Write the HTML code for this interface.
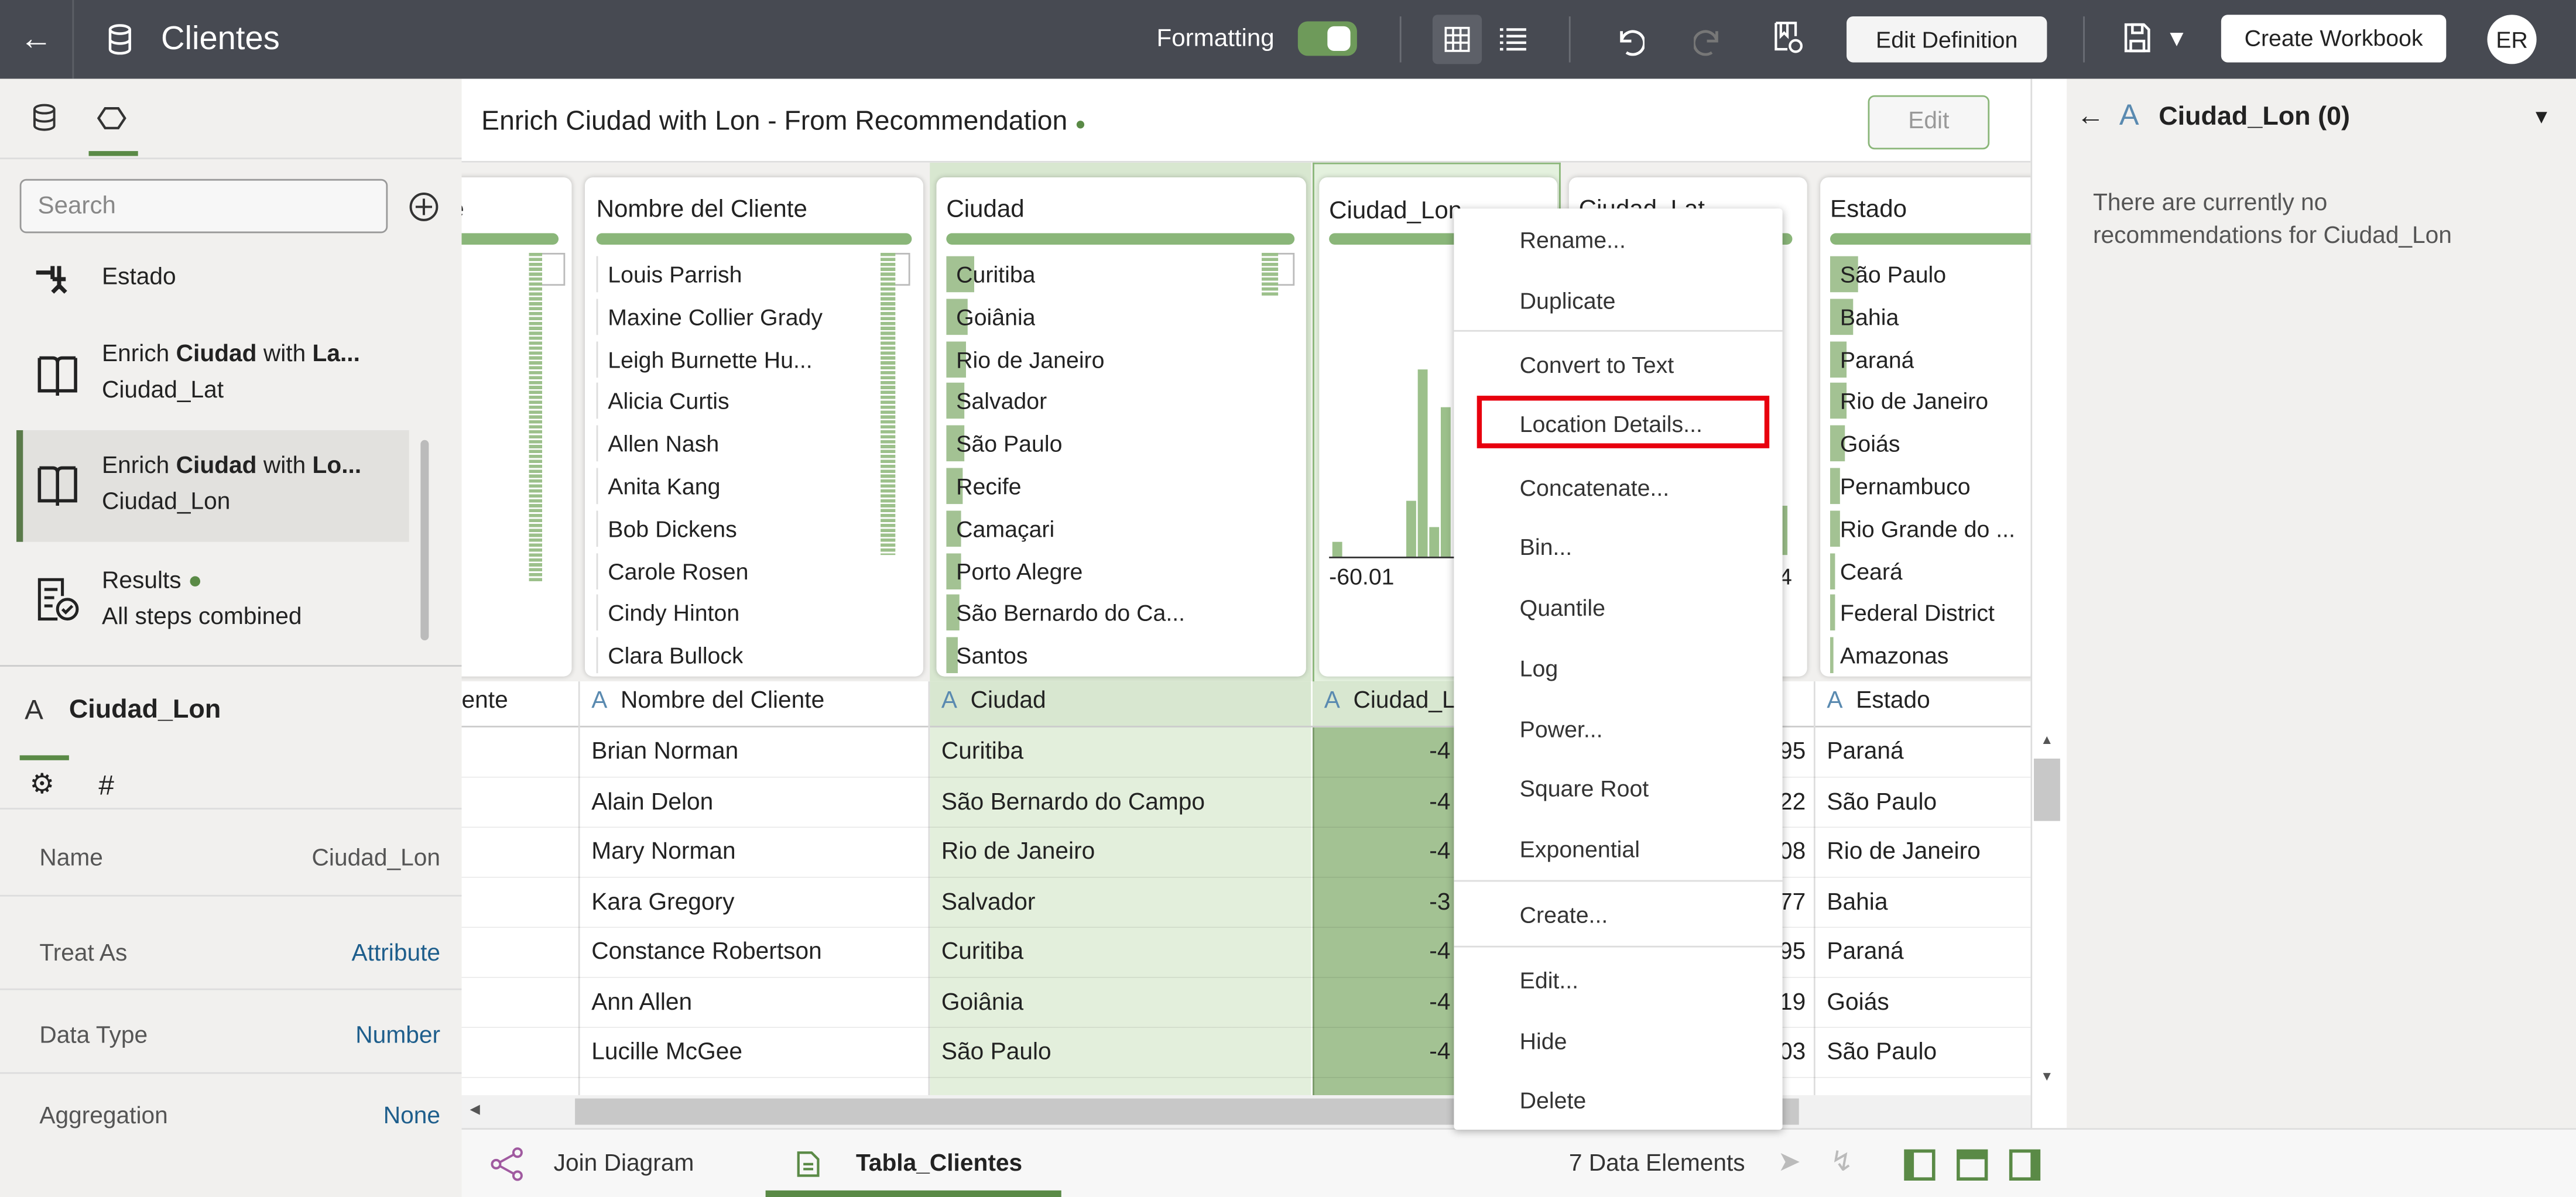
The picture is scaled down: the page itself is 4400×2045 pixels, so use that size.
<!DOCTYPE html>
<html><head><meta charset="utf-8"><style>
*{box-sizing:border-box;margin:0;padding:0}
html,body{width:4400px;height:2045px;overflow:hidden;background:#fff}
#s{position:absolute;left:0;top:0;width:1568px;height:729px;transform:scale(2.8061,2.8052);transform-origin:0 0;font-family:"Liberation Sans",sans-serif;color:#222;font-size:14px;overflow:hidden}
.a{position:absolute}
.t{position:absolute;white-space:nowrap;line-height:1}
.top{left:0;top:0;width:1568px;height:48px;background:#474a52}
.w{color:#fff}
.btn{position:absolute;background:#fff;border-radius:4px;color:#222;font-size:14px;text-align:center;line-height:28px}
.vd{position:absolute;width:1px;background:#6a6d74;top:10px;height:28px}
.card{position:absolute;top:9px;height:304px;background:#fff;border-radius:5px;box-shadow:0 0 3px rgba(0,0,0,.2)}
.bar{position:absolute;top:34px;height:7px;background:#8ab679;border-radius:4px}
.row{position:absolute;height:22px;line-height:22px;font-size:14px;white-space:nowrap;border-left:1px solid #ddd;padding-left:6px;overflow:hidden}
.fill{position:absolute;left:0;top:0;height:22px;background:#a3c293}
.mi{position:absolute;left:40px;font-size:14px;color:#333;white-space:nowrap}
.sep{position:absolute;left:0;width:200px;height:1px;background:#ddd}
.col{position:absolute;top:443px;font-size:14.5px;line-height:30.5px;white-space:nowrap}
</style></head><body><div id="s">
<!-- top bar -->
<div class="a top"></div>
<div class="t w" style="left:12px;top:14px;font-size:20px">&#8592;</div>
<div class="a" style="left:44px;top:0;width:1px;height:48px;background:#5c5f66"></div>
<svg class="a" style="left:64px;top:14px" width="18" height="20" viewBox="0 0 18 20"><g fill="none" stroke="#fff" stroke-width="1.6"><ellipse cx="9" cy="4" rx="6" ry="2.5"/><path d="M3 4v12c0 1.4 2.7 2.5 6 2.5s6-1.1 6-2.5V4M3 10c0 1.4 2.7 2.5 6 2.5s6-1.1 6-2.5"/></g></svg>
<div class="t w" style="left:98px;top:14px;font-size:20px">Clientes</div>
<div class="t w" style="left:704px;top:16px;font-size:15px">Formatting</div>
<div class="a" style="left:790px;top:13px;width:36px;height:21px;border-radius:6px;background:#6e9a5a"></div>
<div class="a" style="left:808px;top:16px;width:14px;height:15px;border-radius:4px;background:#fff"></div>
<div class="vd" style="left:852px"></div>
<div class="a" style="left:872px;top:9px;width:30px;height:30px;background:#5d6068;border-radius:3px"></div>
<svg class="a" style="left:879px;top:16px" width="16" height="16"><g stroke="#fff" stroke-width="1.3" fill="none"><rect x="1" y="1" width="14" height="14"/><path d="M1 5.5h14M1 10h14M5.5 1v14M10 1v14"/></g></svg>
<svg class="a" style="left:912px;top:16px" width="18" height="16"><g stroke="#fff" stroke-width="1.6"><path d="M1 2h2M1 6h2M1 10h2M1 14h2M5 2h12M5 6h12M5 10h12M5 14h12"/></g></svg>
<div class="vd" style="left:955px"></div>
<svg class="a" style="left:981px;top:14px" width="20" height="20"><path d="M6 5v6h6M6 11a7 7 0 1 1 3 7" stroke="#fff" stroke-width="1.7" fill="none"/></svg>
<svg class="a" style="left:1031px;top:14px" width="20" height="20"><path d="M14 5v6H8M14 11a7 7 0 1 0-3 7" stroke="#777" stroke-width="1.7" fill="none"/></svg>
<svg class="a" style="left:1079px;top:12px" width="20" height="22"><g stroke="#fff" stroke-width="1.5" fill="none"><path d="M2 2h12v8M2 2v16h7M5 2v8l2-2 2 2V2"/><circle cx="14" cy="16" r="3.5"/></g></svg>
<div class="btn" style="left:1124px;top:10px;width:122px;height:28px;background:#f4f4f4">Edit Definition</div>
<div class="vd" style="left:1268px"></div>
<svg class="a" style="left:1292px;top:13px" width="18" height="20"><g stroke="#fff" stroke-width="1.6" fill="none"><path d="M2 2h11l3 3v13H2z"/><rect x="6" y="2" width="6" height="5"/><rect x="5" y="12" width="8" height="6"/></g></svg>
<div class="t w" style="left:1318px;top:16px;font-size:14px">&#9660;</div>
<div class="btn" style="left:1352px;top:9px;width:137px;height:29px">Create Workbook</div>
<div class="a" style="left:1514px;top:9px;width:30px;height:30px;border-radius:50%;background:#fff;color:#222;font-size:14px;text-align:center;line-height:30px">ER</div>

<!-- left panel -->
<div class="a" style="left:0;top:48px;width:281px;height:681px;background:#f1f0ee"></div>
<svg class="a" style="left:19px;top:63px" width="16" height="18"><g fill="none" stroke="#333" stroke-width="1.4"><ellipse cx="8" cy="3.5" rx="6" ry="2.5"/><path d="M2 3.5v10c0 1.4 2.7 2.5 6 2.5s6-1.1 6-2.5v-10M2 8.5c0 1.4 2.7 2.5 6 2.5s6-1.1 6-2.5"/></g></svg>
<svg class="a" style="left:59px;top:65px" width="18" height="14"><path d="M5 1h8l4 6-4 6H5L1 7z" fill="none" stroke="#333" stroke-width="1.5"/></svg>
<div class="a" style="left:54px;top:92px;width:30px;height:3px;background:#5a8a46"></div>
<div class="a" style="left:0;top:96px;width:281px;height:1px;background:#ddd"></div>
<div class="a" style="left:12px;top:109px;width:224px;height:33px;border:1px solid #999;border-radius:4px;background:#f7f7f7"></div>
<div class="t" style="left:23px;top:118px;color:#888;font-size:15px">Search</div>
<svg class="a" style="left:248px;top:116px" width="20" height="20"><circle cx="10" cy="10" r="8" fill="none" stroke="#333" stroke-width="1.4"/><path d="M10 5v10M5 10h10" stroke="#333" stroke-width="1.4"/></svg>
<svg class="a" style="left:20px;top:160px" width="22" height="22"><path d="M2 6h10M12 2v8M16 2v14M12 10h8M12 18l4-4 4 4" stroke="#222" stroke-width="2.5" fill="none"/></svg>
<div class="t" style="left:62px;top:162px;font-size:14.5px">Estado</div>
<svg class="a" style="left:22px;top:215px" width="26" height="28"><path d="M2 3h8c2 0 3 1 3 3v20M24 3h-8c-2 0-3 1-3 3M2 3v20h11M24 3v20H13" fill="none" stroke="#222" stroke-width="2"/></svg>
<div class="t" style="left:62px;top:209px;font-size:14.5px">Enrich <b>Ciudad</b> with <b>La...</b></div>
<div class="t" style="left:62px;top:231px;font-size:14.5px">Ciudad_Lat</div>
<div class="a" style="left:10px;top:262px;width:239px;height:68px;background:#e2e1de"></div>
<div class="a" style="left:10px;top:262px;width:4px;height:68px;background:#5a7a4a"></div>
<svg class="a" style="left:22px;top:282px" width="26" height="28"><path d="M2 3h8c2 0 3 1 3 3v20M24 3h-8c-2 0-3 1-3 3M2 3v20h11M24 3v20H13" fill="none" stroke="#222" stroke-width="2"/></svg>
<div class="t" style="left:62px;top:277px;font-size:14.5px">Enrich <b>Ciudad</b> with <b>Lo...</b></div>
<div class="t" style="left:62px;top:299px;font-size:14.5px">Ciudad_Lon</div>
<svg class="a" style="left:21px;top:350px" width="28" height="30"><g fill="none" stroke="#222" stroke-width="1.8"><path d="M14 27H3V3h14v10M6 9h8M6 14h6M6 19h5"/><circle cx="20" cy="21" r="6"/><path d="M17 21l2 2 4-4"/></g></svg>
<div class="t" style="left:62px;top:347px;font-size:14.5px">Results <span style="color:#5a8a46">&#9679;</span></div>
<div class="t" style="left:62px;top:369px;font-size:14.5px">All steps combined</div>
<div class="a" style="left:256px;top:268px;width:5px;height:122px;background:#bbb;border-radius:3px"></div>
<div class="a" style="left:0;top:405px;width:281px;height:1px;background:#ccc"></div>
<div class="t" style="left:15px;top:424px;font-size:17px;color:#333">A</div>
<div class="t" style="left:42px;top:425px;font-size:16px;font-weight:bold">Ciudad_Lon</div>
<div class="a" style="left:12px;top:460px;width:30px;height:3px;background:#5a8a46"></div>
<div class="t" style="left:18px;top:469px;font-size:17px">&#9881;</div>
<div class="t" style="left:60px;top:470px;font-size:17px">#</div>
<div class="a" style="left:0;top:492px;width:281px;height:1px;background:#ddd"></div>
<div class="t" style="left:24px;top:516px;color:#555;font-size:14.5px">Name</div><div class="t" style="right:1300px;top:516px;color:#555;font-size:14.5px">Ciudad_Lon</div>
<div class="a" style="left:0;top:545px;width:281px;height:1px;background:#ddd"></div>
<div class="t" style="left:24px;top:574px;color:#555;font-size:14.5px">Treat As</div><div class="t" style="right:1300px;top:574px;color:#1e5e8c;font-size:14.5px">Attribute</div>
<div class="a" style="left:0;top:602px;width:281px;height:1px;background:#ddd"></div>
<div class="t" style="left:24px;top:624px;color:#555;font-size:14.5px">Data Type</div><div class="t" style="right:1300px;top:624px;color:#1e5e8c;font-size:14.5px">Number</div>
<div class="a" style="left:0;top:653px;width:281px;height:1px;background:#ddd"></div>
<div class="t" style="left:24px;top:673px;color:#555;font-size:14.5px">Aggregation</div><div class="t" style="right:1300px;top:673px;color:#1e5e8c;font-size:14.5px">None</div>

<!-- center header -->
<div class="a" style="left:281px;top:48px;width:955px;height:51px;background:#fff;border-bottom:1px solid #ddd"></div>
<div class="t" style="left:293px;top:66px;font-size:16.5px">Enrich Ciudad with Lon - From Recommendation <span style="color:#5a8a46;font-size:11px">&#9679;</span></div>
<div class="a" style="left:1137px;top:58px;width:74px;height:33px;border:1px solid #8ab679;border-radius:4px;background:#f6f6f6;color:#999;font-size:14.5px;text-align:center;line-height:31px">Edit</div>
<div class="a" style="left:1236px;top:48px;width:22px;height:640px;background:#fff;border-left:1px solid #ddd"></div>

<!-- cards area (clipped) -->
<div class="a" style="left:281px;top:99px;width:955px;height:316px;background:#f1f0ee;overflow:hidden">
<div class="a" style="left:285px;top:0;width:232px;height:316px;background:#d8e7d0"></div>
<div class="a" style="left:518px;top:0;width:151px;height:316px;background:#e4f1de;border:1px solid #8ab679;border-bottom:0"></div>
<div style="position:absolute;left:-281px;top:0;width:1568px;height:316px">

<div class="card" style="left:270px;width:78px"><div class="t" style="left:0;top:12px;font-size:15px">te</div><div class="bar" style="left:0;width:70px"></div>
<div class="a" style="left:52px;top:46px;width:22px;height:20px;border:1px solid #bbb"></div>
<div class="a" style="left:52px;top:46px;width:8px;height:200px;background:repeating-linear-gradient(#9cc08b 0 2px,#fff 2px 3px)"></div></div>

<div class="card" style="left:356px;width:206px"><div class="t" style="left:7px;top:12px;font-size:15px">Nombre del Cliente</div><div class="bar" style="left:7px;width:192px"></div>
<div class="a" style="left:180px;top:46px;width:18px;height:20px;border:1px solid #bbb"></div>
<div class="a" style="left:180px;top:46px;width:9px;height:184px;background:repeating-linear-gradient(#9cc08b 0 2px,#fff 2px 3px)"></div>
<div class="row" style="left:7px;top:48px">Louis Parrish</div>
<div class="row" style="left:7px;top:73.8px">Maxine Collier Grady</div>
<div class="row" style="left:7px;top:99.6px">Leigh Burnette Hu...</div>
<div class="row" style="left:7px;top:125.4px">Alicia Curtis</div>
<div class="row" style="left:7px;top:151.2px">Allen Nash</div>
<div class="row" style="left:7px;top:177px">Anita Kang</div>
<div class="row" style="left:7px;top:202.8px">Bob Dickens</div>
<div class="row" style="left:7px;top:228.6px">Carole Rosen</div>
<div class="row" style="left:7px;top:254.4px">Cindy Hinton</div>
<div class="row" style="left:7px;top:280.2px">Clara Bullock</div></div>

<div class="card" style="left:570px;width:225px"><div class="t" style="left:6px;top:12px;font-size:15px">Ciudad</div><div class="bar" style="left:6px;width:212px"></div>
<div class="a" style="left:198px;top:46px;width:20px;height:20px;border:1px solid #bbb"></div>
<div class="a" style="left:198px;top:46px;width:10px;height:26px;background:repeating-linear-gradient(#9cc08b 0 2px,#fff 2px 3px)"></div>
<div class="row" style="left:6px;top:48px;border:0"><div class="fill" style="width:17px"></div><span style="position:relative">Curitiba</span></div>
<div class="row" style="left:6px;top:73.8px;border:0"><div class="fill" style="width:13px"></div><span style="position:relative">Goiânia</span></div>
<div class="row" style="left:6px;top:99.6px;border:0"><div class="fill" style="width:12px"></div><span style="position:relative">Rio de Janeiro</span></div>
<div class="row" style="left:6px;top:125.4px;border:0"><div class="fill" style="width:11px"></div><span style="position:relative">Salvador</span></div>
<div class="row" style="left:6px;top:151.2px;border:0"><div class="fill" style="width:11px"></div><span style="position:relative">São Paulo</span></div>
<div class="row" style="left:6px;top:177px;border:0"><div class="fill" style="width:10px"></div><span style="position:relative">Recife</span></div>
<div class="row" style="left:6px;top:202.8px;border:0"><div class="fill" style="width:9px"></div><span style="position:relative">Camaçari</span></div>
<div class="row" style="left:6px;top:228.6px;border:0"><div class="fill" style="width:9px"></div><span style="position:relative">Porto Alegre</span></div>
<div class="row" style="left:6px;top:254.4px;border:0"><div class="fill" style="width:8px"></div><span style="position:relative">São Bernardo do Ca...</span></div>
<div class="row" style="left:6px;top:280.2px;border:0"><div class="fill" style="width:7px"></div><span style="position:relative">Santos</span></div></div>

<div class="card" style="left:803px;width:145px"><div class="t" style="left:6px;top:13px;font-size:15px">Ciudad_Lon</div><div class="bar" style="left:6px;width:130px"></div>
<div class="a" style="left:8px;top:222px;width:6px;height:9px;background:#9cc08b"></div>
<div class="a" style="left:53px;top:197px;width:6px;height:34px;background:#9cc08b"></div>
<div class="a" style="left:60px;top:117px;width:6px;height:114px;background:#9cc08b"></div>
<div class="a" style="left:67px;top:213px;width:6px;height:18px;background:#9cc08b"></div>
<div class="a" style="left:74px;top:140px;width:6px;height:91px;background:#9cc08b"></div>
<div class="a" style="left:6px;top:231px;width:130px;height:1px;background:#333"></div>
<div class="t" style="left:6px;top:236px;font-size:14px">-60.01</div></div>

<div class="card" style="left:955px;width:145px"><div class="t" style="left:6px;top:12px;font-size:15px">Ciudad_Lat</div><div class="bar" style="left:6px;width:130px"></div>
<div class="a" style="left:128px;top:200px;width:5px;height:30px;background:#9cc08b"></div>
<div class="t" style="left:128px;top:236px;font-size:14px">4</div></div>

<div class="card" style="left:1108px;width:140px"><div class="t" style="left:6px;top:12px;font-size:15px">Estado</div><div class="bar" style="left:6px;width:134px"></div>
<div class="row" style="left:6px;top:48px;border:0"><div class="fill" style="width:17px"></div><span style="position:relative">São Paulo</span></div>
<div class="row" style="left:6px;top:73.8px;border:0"><div class="fill" style="width:14px"></div><span style="position:relative">Bahia</span></div>
<div class="row" style="left:6px;top:99.6px;border:0"><div class="fill" style="width:10px"></div><span style="position:relative">Paraná</span></div>
<div class="row" style="left:6px;top:125.4px;border:0"><div class="fill" style="width:10px"></div><span style="position:relative">Rio de Janeiro</span></div>
<div class="row" style="left:6px;top:151.2px;border:0"><div class="fill" style="width:9px"></div><span style="position:relative">Goiás</span></div>
<div class="row" style="left:6px;top:177px;border:0"><div class="fill" style="width:6px"></div><span style="position:relative">Pernambuco</span></div>
<div class="row" style="left:6px;top:202.8px;border:0"><div class="fill" style="width:6px"></div><span style="position:relative">Rio Grande do ...</span></div>
<div class="row" style="left:6px;top:228.6px;border:0"><div class="fill" style="width:3px"></div><span style="position:relative">Ceará</span></div>
<div class="row" style="left:6px;top:254.4px;border:0"><div class="fill" style="width:3px"></div><span style="position:relative">Federal District</span></div>
<div class="row" style="left:6px;top:280.2px;border:0"><div class="fill" style="width:2px"></div><span style="position:relative">Amazonas</span></div></div>
</div></div>

<!-- grid -->
<div class="a" style="left:281px;top:415px;width:955px;height:252px;background:#fff"></div>
<div class="a" style="left:566px;top:415px;width:232px;height:252px;background:#e3efdc"></div>
<div class="a" style="left:799px;top:415px;width:151px;height:252px;background:#a3c293;border-left:1px solid #7a9a6a"></div>
<div class="a" style="left:799px;top:415px;width:151px;height:28px;background:#d8e7d0"></div>
<div class="a" style="left:566px;top:415px;width:232px;height:28px;background:#d8e7d0"></div>
<div class="a" style="left:281px;top:442px;width:955px;height:1px;background:#ccc"></div>
<div class="a" style="left:352px;top:415px;width:1px;height:252px;background:#ddd"></div>
<div class="a" style="left:565px;top:415px;width:1px;height:252px;background:#ddd"></div>
<div class="a" style="left:1104px;top:415px;width:1px;height:252px;background:#ddd"></div>
<div class="t" style="left:281px;top:420px;font-size:14.5px">ente</div>
<div class="t" style="left:360px;top:420px;font-size:14.5px"><span style="color:#5a8ab0">A</span>&nbsp; Nombre del Cliente</div>
<div class="t" style="left:573px;top:420px;font-size:14.5px"><span style="color:#5a8ab0">A</span>&nbsp; Ciudad</div>
<div class="t" style="left:806px;top:420px;font-size:14.5px"><span style="color:#5a8ab0">A</span>&nbsp; Ciudad_Lon</div>
<div class="t" style="left:1112px;top:420px;font-size:14.5px"><span style="color:#5a8ab0">A</span>&nbsp; Estado</div>
<div class="col" style="left:360px">Brian Norman<br>Alain Delon<br>Mary Norman<br>Kara Gregory<br>Constance Robertson<br>Ann Allen<br>Lucille McGee</div>
<div class="col" style="left:573px">Curitiba<br>São Bernardo do Campo<br>Rio de Janeiro<br>Salvador<br>Curitiba<br>Goiânia<br>São Paulo</div>
<div class="col" style="left:870px">-4<br>-4<br>-4<br>-3<br>-4<br>-4<br>-4</div>
<div class="col" style="left:1083px">95<br>22<br>08<br>77<br>95<br>19<br>03</div>
<div class="col" style="left:1112px">Paraná<br>São Paulo<br>Rio de Janeiro<br>Bahia<br>Paraná<br>Goiás<br>São Paulo</div>
<div class="a" style="left:281px;top:443px;width:955px;height:224px;background:repeating-linear-gradient(transparent 0 30px,rgba(0,0,0,.09) 30px 30.5px)"></div>
<!-- v scrollbar -->
<div class="a" style="left:1238px;top:462px;width:16px;height:38px;background:#c8c8c8"></div>
<div class="t" style="left:1242px;top:447px;font-size:8px;color:#555">&#9650;</div>
<div class="t" style="left:1242px;top:652px;font-size:8px;color:#555">&#9660;</div>
<!-- h scrollbar -->
<div class="a" style="left:281px;top:667px;width:955px;height:20px;background:#f1f1f1"></div>
<div class="a" style="left:350px;top:669px;width:745px;height:16px;background:#c8c8c8"></div>
<div class="t" style="left:286px;top:672px;font-size:8px;color:#555">&#9664;</div>
<!-- bottom bar -->
<div class="a" style="left:281px;top:687px;width:1287px;height:42px;background:#f7f7f7;border-top:1px solid #ddd"></div>
<svg class="a" style="left:298px;top:698px" width="22" height="22"><g fill="none" stroke="#a05aa0" stroke-width="1.4"><circle cx="4" cy="11" r="2.5"/><circle cx="17" cy="4" r="2.5"/><circle cx="17" cy="18" r="2.5"/><path d="M6 10l9-5M6 12l9 5"/></g></svg>
<div class="t" style="left:337px;top:702px;font-size:14.5px;color:#333">Join Diagram</div>
<svg class="a" style="left:484px;top:700px" width="16" height="18"><g fill="none" stroke="#5a8a46" stroke-width="1.5"><path d="M2 2h8l4 4v10H2z"/><path d="M5 9h6M5 12h6"/></g></svg>
<div class="t" style="left:521px;top:702px;font-size:14.5px;font-weight:bold">Tabla_Clientes</div>
<div class="a" style="left:466px;top:725px;width:180px;height:4px;background:#5a8a46"></div>
<div class="t" style="left:955px;top:702px;font-size:14.5px;color:#333">7 Data Elements</div>
<div class="t" style="left:1082px;top:699px;font-size:17px;color:#bbb">&#10148;</div>
<div class="t" style="left:1114px;top:699px;font-size:17px;color:#bbb">&#8623;</div>
<div class="a" style="left:1159px;top:700px;width:19px;height:19px;border:2px solid #5a8a46;border-left-width:6px"></div>
<div class="a" style="left:1191px;top:700px;width:19px;height:19px;border:2px solid #5a8a46;border-top-width:6px"></div>
<div class="a" style="left:1223px;top:700px;width:19px;height:19px;border:2px solid #5a8a46;border-right-width:6px"></div>

<!-- right panel -->
<div class="a" style="left:1258px;top:48px;width:310px;height:639px;background:#f1f0ee"></div>
<div class="t" style="left:1264px;top:62px;font-size:17px">&#8592;</div>
<div class="t" style="left:1290px;top:61px;font-size:18px;color:#5a8ab0">A</div>
<div class="t" style="left:1314px;top:64px;font-size:16px;font-weight:bold">Ciudad_Lon (0)</div>
<div class="t" style="left:1541px;top:65px;font-size:12px">&#9660;</div>
<div class="t" style="left:1274px;top:114px;font-size:14.5px;color:#555;line-height:20px">There are currently no<br>recommendations for Ciudad_Lon</div>

<!-- context menu -->
<div class="a" style="left:885px;top:127px;width:200px;height:561px;background:#fff;box-shadow:0 1px 5px rgba(0,0,0,.3);border-radius:2px">
<div class="mi" style="top:11px">Rename...</div>
<div class="mi" style="top:48px">Duplicate</div>
<div class="sep" style="top:74px"></div>
<div class="mi" style="top:87px">Convert to Text</div>
<div class="a" style="left:14px;top:114px;width:178px;height:32px;border:3px solid #e8000e"></div>
<div class="mi" style="top:123px">Location Details...</div>
<div class="mi" style="top:162px">Concatenate...</div>
<div class="mi" style="top:198px">Bin...</div>
<div class="mi" style="top:235px">Quantile</div>
<div class="mi" style="top:272px">Log</div>
<div class="mi" style="top:309px">Power...</div>
<div class="mi" style="top:345px">Square Root</div>
<div class="mi" style="top:382px">Exponential</div>
<div class="sep" style="top:409px"></div>
<div class="mi" style="top:422px">Create...</div>
<div class="sep" style="top:449px"></div>
<div class="mi" style="top:462px">Edit...</div>
<div class="mi" style="top:499px">Hide</div>
<div class="mi" style="top:535px">Delete</div>
</div>
</div></body></html>
